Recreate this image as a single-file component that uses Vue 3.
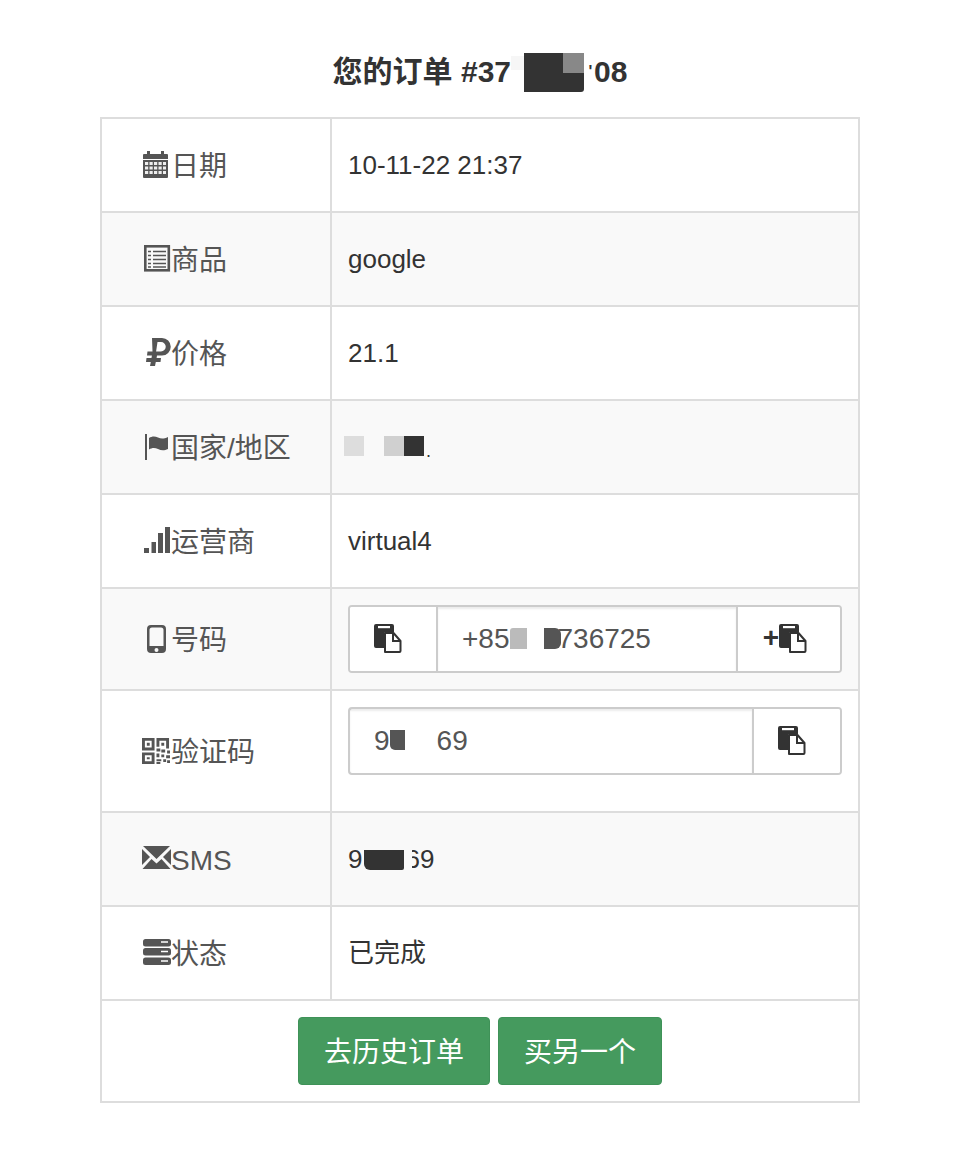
<template>
  <div class="page">
    <svg class="sprite" aria-hidden="true">
      <symbol id="i-copy" viewBox="0 0 28 30">
        <path d="M2 1h16a2 2 0 0 1 2 2v6h-8a2 2 0 0 0-2 2v14H2a2 2 0 0 1-2-2V3a2 2 0 0 1 2-2z" fill="#333" />
        <rect x="4" y="3" width="12" height="2.200" fill="#fff" />
        <path d="M11 10h8.500l7 8V28a1 1 0 0 1-1 1H11z" fill="#fff" stroke="#333" stroke-width="2" stroke-linejoin="round" />
        <path d="M19 10v8h7.500" fill="none" stroke="#333" stroke-width="2" />
      </symbol>
    </svg>

    <h2 class="title">您的订单 #37<span class="title-mask"><i class="fade"></i><i class="dark"></i><i class="corner"></i></span><span class="tick">'</span>08</h2>

    <table class="order">
      <tbody>
        <tr>
          <th>
            <div class="label">
              <svg class="ico" viewBox="0 0 28 28">
                <path d="M4 0h3v3h11V0h3v3h3a1 1 0 0 1 1 1v4H0V4a1 1 0 0 1 1-1h3zM0 9h25v17a1 1 0 0 1-1 1H1a1 1 0 0 1-1-1z" />
                <path d="M2 12.500h21M2 17h21M2 21.500h21" stroke="#eee" stroke-width="3" stroke-dasharray="3.200 1.300" fill="none" />
              </svg>日期
            </div>
          </th>
          <td>10-11-22 21:37</td>
        </tr>
        <tr>
          <th>
            <div class="label">
              <svg class="ico" viewBox="0 0 28 28">
                <rect x="2.300" y="1.300" width="23.500" height="24" fill="none" stroke="#555" stroke-width="2.600" />
                <path d="M5 6.500h3M10 6.500h13M5 10.500h3M10 10.500h13M5 14.500h3M10 14.500h13M5 18.500h3M10 18.500h13M5 22h3M10 22h13" stroke="#555" stroke-width="1.700" fill="none" />
              </svg>商品
            </div>
          </th>
          <td>google</td>
        </tr>
        <tr>
          <th>
            <div class="label">
              <svg class="ico" viewBox="0 0 28 28">
                <path d="M9 -1h10a8.500 8.500 0 0 1 0 17.500h-5l-.4 2.500H18l-.5 4h-4.700l-.8 4H7l.8-4H3l.5-4h5l.4-2.500H4l.5-4h5zM14.500 3l-1.400 9.500H18a4.750 4.750 0 0 0 0-9.500z" fill-rule="evenodd" />
              </svg>价格
            </div>
          </th>
          <td>21.1</td>
        </tr>
        <tr>
          <th>
            <div class="label">
              <svg class="ico" viewBox="0 0 28 28">
                <rect x="2" y="1" width="2" height="26" />
                <path d="M6 5c3-2 6-2 9-.5s6 1.500 10-.5v12c-4 2-7 1.500-10 0s-6-1.500-9 .5z" />
              </svg>国家/地区
            </div>
          </th>
          <td>
            <span class="squares"><i class="sq l1"></i><i class="sq l2"></i><i class="sq d"></i><span class="dot">.</span></span>
          </td>
        </tr>
        <tr>
          <th>
            <div class="label">
              <svg class="ico" viewBox="0 0 28 28">
                <rect x="1" y="21" width="5" height="5" />
                <rect x="8.500" y="15" width="4.500" height="11" />
                <rect x="15" y="6" width="5" height="20" />
                <rect x="22" y="0" width="5" height="26" />
              </svg>运营商
            </div>
          </th>
          <td>virtual4</td>
        </tr>
        <tr>
          <th>
            <div class="label">
              <svg class="ico" viewBox="0 0 28 28">
                <path d="M8 0h11a4 4 0 0 1 4 4v20a4 4 0 0 1-4 4H8a4 4 0 0 1-4-4V4a4 4 0 0 1 4-4zM6.500 5v16h14V5a2.500 2.500 0 0 0-2.500-2.500H9A2.500 2.500 0 0 0 6.500 5zm7 18a2 2 0 1 0 0 4 2 2 0 0 0 0-4z" fill-rule="evenodd" />
              </svg>号码
            </div>
          </th>
          <td class="group-cell">
            <div class="input-group">
              <button class="addon first"><svg class="copy"><use href="#i-copy" /></svg></button>
              <div class="field">+85<span class="phone-mask"><i class="light"></i><i class="mid"></i></span>736725</div>
              <button class="addon last wide"><span class="plus">+</span><svg class="copy"><use href="#i-copy" /></svg></button>
            </div>
          </td>
        </tr>
        <tr>
          <th>
            <div class="label">
              <svg class="ico qr" viewBox="0 0 29 27">
                <path d="M0 0h13v13H0zM3 3v7h7V3zM15 0h13v11h-3V3h-7v6h-3zM0 15h13v12H0zM3 18v6h7v-6z" fill-rule="evenodd" />
                <path d="M5 5h3v3H5zM20 5h3v3h-3zM5 20h3v2H5zM15 11h4v3h-4zM20 12h4v3h-4zM26 13h3v3h-3zM15 16h3v4h-3zM20 17h3v3h-3zM25 18h4v3h-4zM15 22h5v2h-5zM22 22h3v3h-3zM15 25h4v2h-4zM26 23h3v3h-3z" />
              </svg>验证码
            </div>
          </th>
          <td class="group-cell code-cell">
            <div class="input-group">
              <div class="field first-field">9<span class="code-mask"><i></i></span>69</div>
              <button class="addon last"><svg class="copy"><use href="#i-copy" /></svg></button>
            </div>
          </td>
        </tr>
        <tr>
          <th>
            <div class="label">
              <svg class="ico" viewBox="0 0 28 28">
                <path d="M0 1h27L13.500 14zM-1 4l8 8-8 8zM28 4v16l-8-8zM8.500 14l5 4.500 5-4.500L27.500 24H-.5z" />
              </svg>SMS
            </div>
          </th>
          <td>9<span class="sms-mask"><i class="dark"></i><i class="wipe"></i></span>69</td>
        </tr>
        <tr>
          <th>
            <div class="label">
              <svg class="ico" viewBox="0 0 28 28">
                <rect x="0" y="0" width="28" height="7.500" rx="2.500" />
                <rect x="0" y="9" width="28" height="7.500" rx="2.500" />
                <rect x="0" y="18.500" width="28" height="7.500" rx="2.500" />
                <path d="M18 3h7M18 12.500h7M18 22h7" stroke="#fff" stroke-width="1.600" />
              </svg>状态
            </div>
          </th>
          <td>已完成</td>
        </tr>
        <tr>
          <td class="actions" colspan="2">
            <button class="btn">去历史订单</button>
            <button class="btn">买另一个</button>
          </td>
        </tr>
      </tbody>
    </table>
  </div>
</template>

<script setup>
</script>

<style>
html, body { background: #fff; }
</style>

<style scoped>
.page {
  box-sizing: border-box;
  width: 974px; height: 1162px;
  padding: 54px 114px 0 100px;
  font-family: "Liberation Sans", "Noto Sans CJK SC", sans-serif;
  color: #333;
}
.sprite { display: none; }
.title {
  margin: 0 0 27px;
  font-size: 30px; line-height: 36px; font-weight: 700;
  text-align: center; color: #333;
}
.title-mask {
  display: inline-block; position: relative;
  width: 76px; height: 36px; vertical-align: top;
}
.title-mask i { position: absolute; display: block; }
.title-mask .fade { left: 0; top: 2px; width: 24px; height: 14px; background: #f6f6f6; }
.title-mask .dark { left: 13px; top: -1px; width: 60px; height: 39px; background: #333; border-radius: 0 0 3px 0; }
.title-mask .corner { left: 52px; top: -1px; width: 21px; height: 20px; background: #888; }
.tick { display: inline-block; width: 7px; font-size: 16px; vertical-align: top; }

.order {
  width: 760px; table-layout: fixed;
  border-collapse: collapse;
  font-size: 26px;
}
.order th, .order td { border: 2px solid #ddd; box-sizing: border-box; height: 94px; }
.order th {
  width: 230px; padding: 4px 0 0 41px;
  font-weight: 400; text-align: left; color: #555;
}
.order td { padding: 16px; color: #333; line-height: 36px; }
.order tr:nth-child(even) th, .order tr:nth-child(even) td { background: #f9f9f9; }
.label { display: flex; align-items: center; font-size: 28px; line-height: 36px; }
.ico { width: 28px; height: 28px; margin-top: -4px; flex: none; fill: #555; overflow: visible; }
.ico.qr { margin-left: -1px; margin-right: 1px; }

.squares { display: inline-flex; align-items: center; margin-left: -4px; position: relative; }
.sq { display: block; width: 20px; height: 20px; }
.sq.l1 { background: #ddd; margin-right: 20px; }
.sq.l2 { background: #d0d0d0; }
.sq.d { background: #333; }
.dot { position: absolute; left: 82px; top: -3px; font-size: 18px; }

.group-cell { height: 102px !important; }
.code-cell { height: 122px !important; vertical-align: top; }
.input-group {
  display: flex; height: 68px; box-sizing: border-box;
  border: 2px solid #ccc; border-radius: 4px;
  background: #fff; color: #555;
}
.field {
  flex: 1; display: flex; align-items: center;
  padding-left: 24px; font-size: 28px;
  box-shadow: inset 0 2px 2px rgba(0, 0, 0, 0.075);
}
.addon {
  display: flex; align-items: center; justify-content: center;
  padding: 0 10px 2px 0; border: 0; background: #fff; color: #333;
  font-family: inherit;
}
.addon.first { width: 88px; border-right: 2px solid #ccc; border-radius: 2px 0 0 2px; }
.addon.last { width: 88px; border-left: 2px solid #ccc; border-radius: 0 2px 2px 0; }
.addon.wide { width: 104px; padding-right: 8px; }
.plus { font-size: 28px; font-weight: 700; margin-right: 0; line-height: 1; }
.copy { width: 28px; height: 30px; }

.phone-mask { position: relative; display: inline-block; width: 48px; height: 22px; margin-left: 0; }
.phone-mask i, .code-mask i, .sms-mask i { position: absolute; display: block; }
.phone-mask .light { left: 0; top: 0; width: 17px; height: 21px; background: #bbb; border-radius: 3px 0 0 0; }
.phone-mask .mid { left: 34px; top: 0; width: 17px; height: 21px; background: #555; border-radius: 0 6px 6px 0; }
.code-mask { position: relative; display: inline-block; width: 47px; height: 22px; }
.code-mask i { left: 0; top: 0; width: 15px; height: 20px; background: #555; border-radius: 0 0 0 5px; }
.sms-mask { position: relative; display: inline-block; width: 43px; height: 20px; vertical-align: -2px; }
.sms-mask .dark { left: 2px; top: 0; width: 40px; height: 20px; background: #333; border-radius: 0 0 2px 6px; }
.sms-mask .wipe { left: 42px; top: -2px; width: 8px; height: 24px; background: #f9f9f9; }

.actions { text-align: center; height: 102px !important; background: #fff !important; font-size: 0; }
.btn {
  height: 68px; padding: 4px 25px 0; margin: 0 4px;
  border: 1px solid #3f9258; border-radius: 4px;
  background: #459a5e; color: #fff;
  font-family: inherit; font-size: 28px; line-height: 1; vertical-align: top;
}
</style>
